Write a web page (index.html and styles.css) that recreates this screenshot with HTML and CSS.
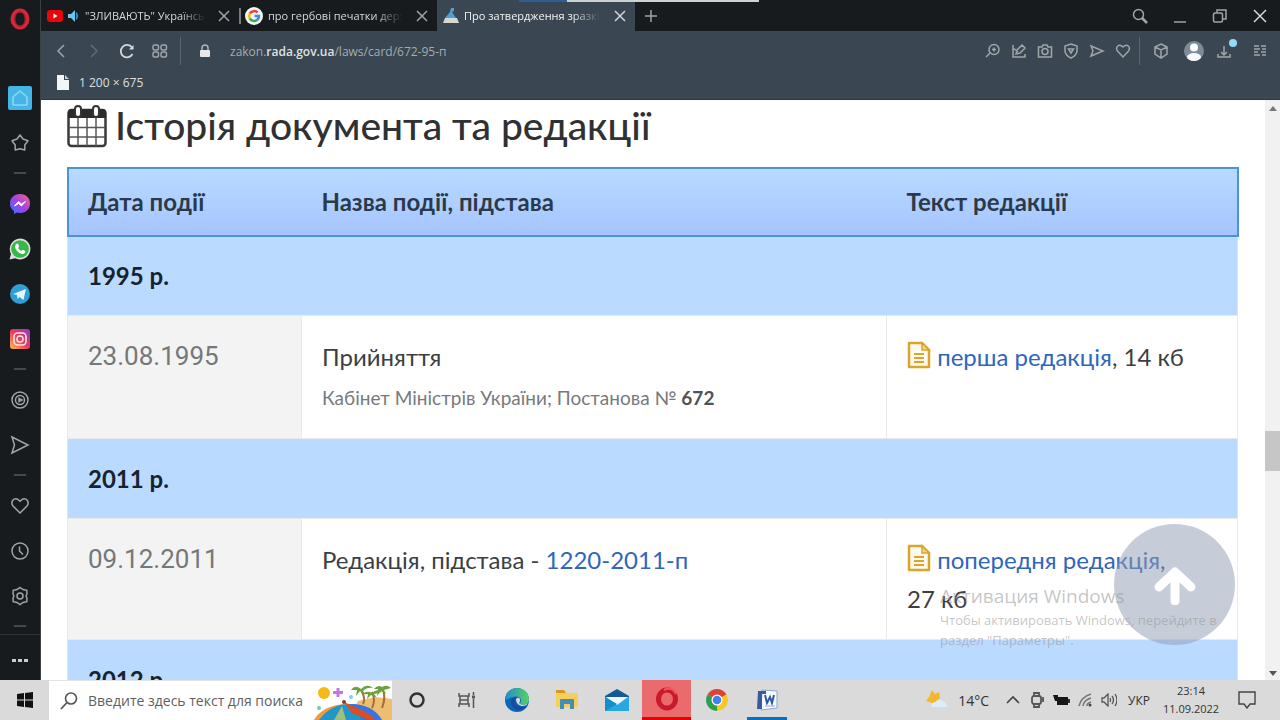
FILE: index.html
```html
<!DOCTYPE html>
<html lang="uk">
<head>
<meta charset="utf-8">
<meta name="viewport" content="width=device-width, initial-scale=1">
<title>Історія документа та редакції</title>
<link rel="stylesheet" href="styles.css">
</head>
<body>
<div class="window">
  <nav class="sidebar" aria-label="Бічна панель">
    <button class="opera-menu" aria-label="Opera"><svg width="22" height="22" viewBox="0 0 22 22"><ellipse cx="11" cy="11" rx="7.5" ry="8.5" fill="none" stroke="#d5273a" stroke-width="4"/><ellipse cx="11" cy="11" rx="5" ry="7.5" fill="none" stroke="#a3182b" stroke-width="1"/></svg></button>
    <div class="side-list">
      <button class="side-item" aria-label="Головна"><svg width="26" height="26" viewBox="0 0 26 26"><rect x="1" y="1" width="24" height="24" rx="2" fill="#45b4e6"/><path d="M6 12l7-6 7 6v8H6z" fill="none" stroke="#8ad7f6" stroke-width="1.6" stroke-linejoin="round"/></svg></button>
      <button class="side-item" aria-label="Закладки"><svg class="line" width="20" height="20" viewBox="0 0 20 20"><path d="M10 2l3 4 5 1.800-3.200 4.200V17L10 15.800 5.200 17v-5L2 7.800 7 6z" stroke-linejoin="round"/></svg></button>
      <hr class="side-dash">
      <button class="side-item" aria-label="Messenger"><svg width="24" height="24" viewBox="0 0 24 24"><defs><linearGradient id="ms" x1="0" y1="1" x2="1" y2="0"><stop offset="0" stop-color="#2a7bff"/><stop offset=".5" stop-color="#a341e8"/><stop offset="1" stop-color="#ff6478"/></linearGradient></defs><path d="M12 2c6 0 10 4 10 9.500S18 21 12 21l-3-.5L6 22v-3c-3-2-4-4.500-4-7.500C2 6 6 2 12 2z" fill="url(#ms)"/><path d="M6.500 14l4-4.500 3 2.500 4-2.500-4 4.500-3-2.500z" fill="#fff" stroke="#fff" stroke-width="1"/></svg></button>
      <button class="side-item" aria-label="WhatsApp"><svg width="24" height="24" viewBox="0 0 24 24"><path d="M12 1.500a10.500 10.500 0 1 1-5 19.800L1.500 22.500 3 17A10.500 10.500 0 0 1 12 1.500z" fill="#ddd"/><circle cx="12" cy="12" r="8.800" fill="#35b944"/><path d="M8 7l2-.5 1.200 3-1 1.500c.8 1.500 1.800 2.300 3.200 3l1.400-1.200 2.700 1.300c0 2-1.500 3-3 2.900-4-.5-7.500-4.500-7.500-7.500z" fill="#fff"/></svg></button>
      <button class="side-item" aria-label="Telegram"><svg width="24" height="24" viewBox="0 0 24 24"><circle cx="12" cy="12" r="10" fill="#2f9fd6"/><path d="M5 12l13-5-2.500 11-4-3-2 2-.5-4z" fill="#e8f5fc"/></svg></button>
      <button class="side-item" aria-label="Instagram"><svg width="24" height="24" viewBox="0 0 24 24"><defs><linearGradient id="ig" x1="0" y1="1" x2="1" y2="0"><stop offset="0" stop-color="#ffc04a"/><stop offset=".5" stop-color="#e8395f"/><stop offset="1" stop-color="#8a3ad0"/></linearGradient></defs><rect x="2" y="2" width="20" height="20" rx="3" fill="url(#ig)"/><rect x="6" y="6" width="12" height="12" rx="3.500" fill="none" stroke="#ffe2dc" stroke-width="1.600"/><circle cx="12" cy="12" r="3" fill="none" stroke="#ffe2dc" stroke-width="1.600"/></svg></button>
      <hr class="side-dash">
      <button class="side-item" aria-label="Плеєр"><svg class="line" width="20" height="20" viewBox="0 0 20 20"><circle cx="10" cy="10" r="8"/><circle cx="10" cy="10" r="4.500"/><path d="M9 8.500l3 1.500-3 1.500z"/></svg></button>
      <button class="side-item" aria-label="Потік"><svg class="line" width="20" height="20" viewBox="0 0 20 20"><path d="M2 2l16 8-16 8 2.500-8z"/></svg></button>
      <hr class="side-dash">
      <button class="side-item" aria-label="Обране"><svg class="line" width="20" height="20" viewBox="0 0 20 20"><path d="M10 17L3 10C0 6 4 1 8 3.500l2 1.800 2-1.800C16 1 20 6 17 10z"/></svg></button>
      <button class="side-item" aria-label="Історія"><svg class="line" width="20" height="20" viewBox="0 0 20 20"><circle cx="10" cy="10" r="8"/><path d="M9.500 5.500V10l3.500 3.500"/></svg></button>
      <button class="side-item" aria-label="Налаштування"><svg class="line" width="20" height="20" viewBox="0 0 20 20"><path d="M10 1.500l3 2 3.800.8.200 3.700-1 2 1 2-.2 3.700-3.800.8-3 2-3-2-3.800-.8L3 12l1-2-1-2 .2-3.700L7 3.500z"/><circle cx="10" cy="10" r="3"/></svg></button>
      <hr class="side-dash">
    </div>
    <button class="side-more" aria-label="Більше"><svg width="18" height="6" viewBox="0 0 18 6" fill="#c9cbcd"><rect x="1" y="1" width="4" height="3"/><rect x="7" y="1" width="4" height="3"/><rect x="13" y="1" width="4" height="3"/></svg></button>
  </nav>

  <div class="browser">
    <header class="tabs">
      <div class="tab">
        <svg width="16" height="12" viewBox="0 0 16 12"><rect width="16" height="12" rx="3" fill="#e8050b"/><path d="M6.500 3.500l4 2.500-4 2.500z" fill="#fff"/></svg>
        <svg width="12" height="12" viewBox="0 0 12 12"><path d="M0 4h3l4-4v12L3 8H0z" fill="#6fc4ec"/><path d="M8 2c3 1 3 7 0 8z" fill="#2985bb"/></svg>
        <span class="tab-title">"ЗЛИВАЮТЬ" Українську</span>
        <button class="close" aria-label="Закрити вкладку"><svg class="line" width="12" height="12" viewBox="0 0 12 12"><path d="M1 1l10 10M11 1L1 11"/></svg></button>
      </div>
      <div class="tab divided">
        <svg width="18" height="18" viewBox="0 0 18 18"><circle cx="9" cy="9" r="9" fill="#f4f4f4"/><g fill="none" stroke-width="2.500"><path d="M12.500 5.500A5 5 0 0 0 4.800 6.500" stroke="#e94335"/><path d="M4.800 6.500a5 5 0 0 0 0 5" stroke="#fabb05"/><path d="M4.800 11.500a5 5 0 0 0 7.500 1.300" stroke="#34a853"/><path d="M12.300 12.800A5 5 0 0 0 14 9H9.500" stroke="#4285f4"/></g></svg>
        <span class="tab-title">про гербові печатки держави</span>
        <button class="close" aria-label="Закрити вкладку"><svg class="line" width="12" height="12" viewBox="0 0 12 12"><path d="M1 1l10 10M11 1L1 11"/></svg></button>
      </div>
      <div class="tab active">
        <svg width="16" height="16" viewBox="0 0 16 16"><path d="M8 0h3v3L9 4l4 6H2l5-6z" fill="#4f9ed5"/><path d="M2 10h12l2 5H0z" fill="#d6d6d3"/></svg>
        <span class="tab-title">Про затвердження зразків</span>
        <button class="close" aria-label="Закрити вкладку"><svg class="line bright" width="12" height="12" viewBox="0 0 12 12"><path d="M1 1l10 10M11 1L1 11"/></svg></button>
        <span class="load-bar"></span>
      </div>
      <button class="new-tab" aria-label="Нова вкладка"><svg class="line" width="14" height="14" viewBox="0 0 14 14"><path d="M7 1v12M1 7h12"/></svg></button>
      <div class="win-controls">
        <button aria-label="Пошук"><svg class="line" width="16" height="16" viewBox="0 0 16 16"><circle cx="6.500" cy="6.500" r="5"/><path d="M10 10l5 5" stroke-width="2.500"/></svg></button>
        <button aria-label="Згорнути"><svg class="line" width="14" height="14" viewBox="0 0 14 14"><path d="M1 13h12"/></svg></button>
        <button aria-label="Розгорнути"><svg class="line" width="16" height="16" viewBox="0 0 16 16"><rect x="1.500" y="5" width="9" height="9" rx="1.500"/><path d="M5 4.500V2h9v9h-3"/></svg></button>
        <button aria-label="Закрити"><svg class="line bright" width="14" height="14" viewBox="0 0 14 14"><path d="M1 1l12 12M13 1L1 13"/></svg></button>
      </div>
    </header>

    <div class="toolbar">
      <div class="nav-buttons">
        <button aria-label="Назад"><svg class="line" width="14" height="16" viewBox="0 0 14 16"><path d="M10 2L4 8l6 6"/></svg></button>
        <button aria-label="Вперед" disabled><svg class="line" width="14" height="16" viewBox="0 0 14 16"><path d="M4 2l6 6-6 6"/></svg></button>
        <button aria-label="Оновити"><svg class="line bright" width="16" height="16" viewBox="0 0 16 16"><path d="M13.500 11A6.200 6.200 0 1 1 13 4.500" stroke-width="1.800"/><path d="M14.500 2v4.500H10z" fill="#dadddf" stroke="none"/></svg></button>
        <button aria-label="Експрес-панель"><svg class="line" width="16" height="14" viewBox="0 0 16 14"><rect x="1" y="1" width="5.500" height="5" rx="1.500"/><rect x="9" y="1" width="5.500" height="5" rx="1.500"/><rect x="1" y="8" width="5.500" height="5" rx="1.500"/><rect x="9" y="8" width="5.500" height="5" rx="1.500"/></svg></button>
      </div>
      <button class="address" aria-label="Адреса">
        <svg width="12" height="14" viewBox="0 0 12 14"><rect x="1" y="6" width="10" height="7" rx="1" fill="#e6e8ea"/><path d="M3 6V4a3 3 0 0 1 6 0v2" fill="none" stroke="#aeb4b9" stroke-width="1.500"/></svg>
        <span>zakon.<b>rada.gov.ua</b>/laws/card/672-95-п</span>
      </button>
      <div class="page-tools">
        <button aria-label="Масштаб"><svg class="line" width="16" height="16" viewBox="0 0 16 16"><circle cx="9" cy="6.500" r="5"/><path d="M5 10l-4 4M7 6.500h4M9 4.500v4"/></svg></button>
        <button aria-label="Поділитися"><svg class="line" width="16" height="16" viewBox="0 0 16 16"><path d="M2 2v12h12v-3M5 11l1-4 5-5 3 3-5 5zM2 5l5 4"/></svg></button>
        <button aria-label="Знімок"><svg class="line" width="16" height="16" viewBox="0 0 16 16"><path d="M1.500 4H5l1-2h4l1 2h3.500v10h-13z"/><circle cx="8" cy="8.500" r="3"/></svg></button>
        <button aria-label="Блокування реклами"><svg class="line" width="16" height="16" viewBox="0 0 16 16"><path d="M8 1l6 2v5c0 3-3 6-6 7-3-1-6-4-6-7V3z"/><path d="M5.500 6h5L8 10z"/></svg></button>
        <button aria-label="Надіслати"><svg class="line" width="16" height="16" viewBox="0 0 16 16"><path d="M2 3l12 5-12 5 2-5z"/></svg></button>
        <button aria-label="Додати в обране"><svg class="line" width="16" height="16" viewBox="0 0 16 16"><path d="M8 14L2.500 8C0 4 4 0 8 4c4-4 8 0 5.500 4z"/></svg></button>
      </div>
      <div class="user-tools">
        <button aria-label="Розширення"><svg class="line" width="16" height="16" viewBox="0 0 16 16"><path d="M8 1l6 3v7l-6 4-6-4V4zM2 4l6 3 6-3M8 7v8"/></svg></button>
        <button aria-label="Профіль"><svg width="20" height="20" viewBox="0 0 20 20"><circle cx="10" cy="10" r="10" fill="#7b8b99"/><circle cx="10" cy="6.500" r="4" fill="#fff"/><ellipse cx="10" cy="16" rx="7" ry="4" fill="#f6faff"/></svg></button>
        <button aria-label="Завантаження"><svg class="line" width="20" height="26" viewBox="0 0 20 26"><path d="M7 8v9M4 14l3 3 3-3M1 16v3h12v-3"/><circle cx="16" cy="5" r="4" fill="#8edcfa" stroke="none"/></svg></button>
        <button aria-label="Налаштування панелі"><svg class="line" width="14" height="14" viewBox="0 0 14 14"><path d="M1 2h5M8 2h5M1 5h6M9 5h4M1 8h4M8 8h5M1 11h6M9 11h4"/></svg></button>
      </div>
    </div>

    <div class="bookmarks">
      <a class="bookmark" href="#"><svg width="12" height="15" viewBox="0 0 12 15"><path d="M0 0h7v5h5v10H0z" fill="#f4f5f6"/><path d="M8 0l4 4H8z" fill="#c6cbd0"/></svg>1 200 × 675</a>
    </div>

    <div class="viewport">
      <main class="page">
        <h1><svg width="40" height="44" viewBox="0 0 40 44"><rect x="1.500" y="6" width="37" height="36" rx="3" fill="#fff" stroke="#3a3a3a" stroke-width="2.500"/><path d="M1 14V9q0-4 4-4h30q4 0 4 4v5z" fill="#2b2b2b"/><path d="M2 23.500h36M2 33h36M11 14v28M20 14v28M29 14v28" stroke="#555" stroke-width="1.500"/><rect x="8" y="2" width="6" height="11" rx="3" fill="#fff" stroke="#333" stroke-width="2"/><rect x="26" y="2" width="6" height="11" rx="3" fill="#fff" stroke="#333" stroke-width="2"/></svg>Історія документа та редакції</h1>
        <table class="history">
          <thead>
            <tr><th class="col-date" scope="col">Дата події</th><th class="col-event" scope="col">Назва події, підстава</th><th class="col-text" scope="col">Текст редакції</th></tr>
          </thead>
          <tbody>
            <tr class="year"><th colspan="3">1995 р.</th></tr>
            <tr>
              <td class="date">23.08.1995</td>
              <td>Прийняття<p class="note">Кабінет Міністрів України; Постанова № <b>672</b></p></td>
              <td><svg class="doc" width="24" height="28" viewBox="0 0 24 28"><path d="M2 2h13l7 7v17H2z" fill="#fffaf0" stroke="#dba52c" stroke-width="2.500" stroke-linejoin="round"/><path d="M15 2v7h7z" fill="#f3d58a" stroke="#dba52c" stroke-width="1.500"/><path d="M7 13h10M7 17h10M7 21h10" stroke="#dba52c" stroke-width="2"/></svg> <a href="#">перша редакція</a>, 14 кб</td>
            </tr>
            <tr class="year"><th colspan="3">2011 р.</th></tr>
            <tr>
              <td class="date">09.12.2011</td>
              <td>Редакція, підстава - <a href="#">1220-2011-п</a></td>
              <td><svg class="doc" width="24" height="28" viewBox="0 0 24 28"><path d="M2 2h13l7 7v17H2z" fill="#fffaf0" stroke="#dba52c" stroke-width="2.500" stroke-linejoin="round"/><path d="M15 2v7h7z" fill="#f3d58a" stroke="#dba52c" stroke-width="1.500"/><path d="M7 13h10M7 17h10M7 21h10" stroke="#dba52c" stroke-width="2"/></svg> <a href="#">попередня редакція</a>,<br>27 кб</td>
            </tr>
            <tr class="year"><th colspan="3">2012 р.</th></tr>
          </tbody>
        </table>
      </main>
      <div class="scrollbar" aria-hidden="true">
        <svg width="8" height="5" viewBox="0 0 8 5"><path d="M0 5l4-5 4 5z" fill="#777"/></svg>
        <span class="track"><span class="thumb"></span></span>
        <svg width="8" height="5" viewBox="0 0 8 5"><path d="M0 0h8L4 5z" fill="#555"/></svg>
      </div>
      <button class="to-top" aria-label="Догори"><svg width="42" height="40" viewBox="0 0 42 40"><path d="M21 36V8M5 22L21 7l16 15" fill="none" stroke="#fff" stroke-width="9" stroke-linecap="round" stroke-linejoin="round"/></svg></button>
      <div class="watermark"><p class="watermark-title">Активация Windows</p><p>Чтобы активировать Windows, перейдите в раздел "Параметры".</p></div>
    </div>
  </div>
</div>

<footer class="taskbar">
  <button class="start" aria-label="Пуск"><svg width="18" height="18" viewBox="0 0 18 18"><path d="M1 3l7-1v6.500H1zM9 2l8-1v7.500H9zM1 9.500h7V16l-7-1zM9 9.500h8V17l-8-1z" fill="#111"/></svg></button>
  <label class="search">
    <svg width="18" height="18" viewBox="0 0 18 18"><circle cx="11" cy="6.500" r="5.500" fill="none" stroke="#555" stroke-width="1.600"/><path d="M7 10.500L1 17" stroke="#555" stroke-width="1.800"/></svg>
    <input type="text" placeholder="Введите здесь текст для поиска" aria-label="Введите здесь текст для поиска">
    <svg width="78" height="38" viewBox="0 0 78 38"><path d="M44 19q18-6 34-2v21H34z" fill="#efbd72"/><path d="M0 38Q8 24 30 22L50 38z" fill="#ef9a3f"/><path d="M5 38q12-16 30-16 24 0 33 16z" fill="#2595c8"/><path d="M36 22q22 0 32 16H48z" fill="#3674e4"/><path d="M20 38l8-14 4 14z" fill="#9dc17c"/><path d="M30 20l20 9 11 7-6 2-17-7z" fill="#d94f25"/><circle cx="30" cy="20" r="2" fill="#8b3a24"/><circle cx="10" cy="11" r="6" fill="#f6ba18"/><path d="M24 6v9M19 10.500h10" stroke="#c474e8" stroke-width="3"/><circle cx="5" cy="26" r="2" fill="#6bd1a0"/><circle cx="37" cy="15" r="2" fill="#79cff5"/><path d="M47 8q5 8 2 14M58 10q4 8 0 16M69 8q3 8-1 18" fill="none" stroke="#a56d35" stroke-width="2"/><path d="M37 8q4-6 10-1 6-6 12-1-6-1-10 3l3 4-6-4-4 5 1-6zM49 12q4-4 9-1 5-5 10-1l-8 2 3 4-6-3-4 4 1-5zM60 7q4-5 8-2 5-3 9 1l-7 2 2 4-5-3-4 5 1-7z" fill="#68a33b"/></svg>
  </label>
  <div class="apps">
    <button aria-label="Cortana"><svg width="18" height="18" viewBox="0 0 18 18"><circle cx="9" cy="9" r="6.500" fill="none" stroke="#333" stroke-width="2.500"/></svg></button>
    <button aria-label="Представление задач"><svg width="18" height="18" viewBox="0 0 18 18" fill="none" stroke="#555" stroke-width="1.500"><path d="M1 2v3h10V2M1 16v-3h10v3M2 5v8M10 5v8M2 9h8M15.500 1v3M15.500 8v9"/><path d="M14 6h3" stroke-width="3"/></svg></button>
    <button aria-label="Edge"><svg width="26" height="26" viewBox="0 0 26 26"><defs><linearGradient id="ed"><stop offset="0" stop-color="#218bd7"/><stop offset="1" stop-color="#56d35c"/></linearGradient></defs><circle cx="13" cy="13" r="12" fill="#0d65b5"/><path d="M1 12C3-3 24-2 25 12c0 6-7 7-10 5 5-4 0-9-6-7-5 1-7 4-8 2z" fill="url(#ed)"/><path d="M12 11c-4 4 1 11 11 8-6 8-17 3-16-5 1-3 3-4 5-3z" fill="#164c9b"/><path d="M12 12c4-4 5 2 3 4 2 3 7 2 9 0-2 5-12 4-12-4z" fill="#ddd"/></svg></button>
    <button aria-label="Проводник"><svg width="24" height="22" viewBox="0 0 24 22"><path d="M1 1h8l3 3h11v14H1z" fill="#f7ce59"/><path d="M1 1h8l2 3H1z" fill="#d3981f"/><path d="M5 20v-9q0-1 1-1h12q1 0 1 1v9h-4v-5H9v5z" fill="#438eb8"/></svg></button>
    <button aria-label="Почта"><svg width="26" height="24" viewBox="0 0 26 24"><path d="M1 8l12-7 12 7v3H1z" fill="#145a96"/><path d="M1 9h24v14H1z" fill="#28a8e0"/><path d="M2 9h22l-11 8z" fill="#edf6fc"/><path d="M1 9v14l12-7z" fill="#158ccc"/></svg></button>
    <button class="app-opera" aria-label="Opera"><svg width="26" height="26" viewBox="0 0 26 26"><ellipse cx="13" cy="13" rx="8.500" ry="9" fill="none" stroke="#c9192d" stroke-width="5"/><path d="M10 4q8-4 12 4" fill="none" stroke="#f05560" stroke-width="2"/></svg></button>
    <button aria-label="Chrome"><svg width="24" height="24" viewBox="0 0 24 24"><path d="M12 12L2.500 6.500A11 11 0 0 1 21.500 6.500z" fill="#db4336"/><path d="M12 12l9.500-5.500A11 11 0 0 1 12 23z" fill="#f8c829"/><path d="M12 12v11A11 11 0 0 1 2.500 6.500z" fill="#2e9d4f"/><circle cx="12" cy="12" r="5.500" fill="#fff"/><circle cx="12" cy="12" r="4.300" fill="#3d82ed"/></svg></button>
    <button class="app-word" aria-label="Word"><svg width="24" height="24" viewBox="0 0 24 24"><path d="M7 2l15 1v17L6 22z" fill="#f7faff" stroke="#8ba6d4"/><path d="M3 3h8v3H7v15H2z" fill="#365c9f"/><path d="M10 7l2 8 3-6 2 6 2-8" fill="none" stroke="#2d58a6" stroke-width="2"/><path d="M10 18h10" stroke="#8aa9dd"/></svg></button>
  </div>
  <div class="tray">
    <button class="weather"><svg width="22" height="20" viewBox="0 0 22 20"><path d="M6 0l3 4 4-2 1 6-6 6-5-2-3-1 3-4z" fill="#f5b82c"/><path d="M5 17q0-5 5-5 2-4 6-1 5 1 5 6z" fill="#dcecf8"/></svg>14°C</button>
    <div class="tray-icons">
      <button aria-label="Скрытые значки"><svg width="14" height="10" viewBox="0 0 14 10"><path d="M1 8l6-6 6 6" fill="none" stroke="#444" stroke-width="1.600"/></svg></button>
      <button aria-label="Устройство"><svg width="14" height="16" viewBox="0 0 14 16" fill="none" stroke="#555" stroke-width="1.800"><rect x="2" y="4" width="9" height="8" rx="2"/><path d="M4 4V1h5v3M4 12v3h5v-3M13 5v5"/></svg></button>
      <button aria-label="Батарея"><svg width="18" height="12" viewBox="0 0 18 12"><path d="M1 1h5v2h10v8H5V7H3z" fill="#171717"/><path d="M17 5v4" stroke="#333" stroke-width="2"/></svg></button>
      <button aria-label="Сеть"><svg width="14" height="14" viewBox="0 0 14 14"><path d="M1 13Q3 4 13 1M5 13q1-6 8-8M9 13q0-3 4-4" fill="none" stroke="#777" stroke-width="1.500"/><circle cx="12" cy="12" r="1.500" fill="#444"/></svg></button>
      <button aria-label="Громкость"><svg width="16" height="14" viewBox="0 0 16 14" fill="none" stroke="#555" stroke-width="1.300"><path d="M1 5h2l4-4v12L3 9H1zM9 5q1 2 0 4M11 3q3 4 0 8M14 1q4 6 0 12"/></svg></button>
    </div>
    <button class="lang">УКР</button>
    <button class="clock"><time>23:14</time><span>11.09.2022</span></button>
    <button class="notify" aria-label="Уведомления"><svg width="18" height="18" viewBox="0 0 18 18"><path d="M1 1h16v12h-5l-3 4-3-4H1z" fill="none" stroke="#444" stroke-width="1.400"/></svg></button>
  </div>
</footer>
</body>
</html>
```
FILE: styles.css
```css
* { box-sizing: border-box; }

body {
  margin: 0;
  height: 100vh;
  display: flex;
  flex-direction: column;
  overflow: hidden;
  font-family: "Open Sans", "Noto Sans", sans-serif;
  background: #fff;
}

button {
  display: flex;
  align-items: center;
  justify-content: center;
  margin: 0;
  padding: 0;
  border: 0;
  background: none;
  font: inherit;
  color: inherit;
}

p { margin: 0; }
a { color: #2f66bb; text-decoration: none; }
svg { flex: none; }

.line { fill: none; stroke: #a0a5a9; stroke-width: 1.5; }
.bright { stroke: #d4d7d9; }

.window { flex: 1; min-height: 0; display: flex; }

/* Sidebar */
.sidebar {
  width: 41px;
  flex: none;
  display: flex;
  flex-direction: column;
  background: #171b1e;
  border-right: 1px solid #3b4045;
}
.opera-menu { height: 40px; margin-bottom: 37px; }
.side-list { flex: 1; display: flex; flex-direction: column; }
.side-item { height: 45px; }
.side-dash { width: 12px; height: 2px; margin: 7px auto; border: 0; background: #44494c; }
.side-more { height: 47px; padding-top: 7px; border-top: 1px solid #303539; }

/* Tabs */
.browser { flex: 1; min-width: 0; display: flex; flex-direction: column; }
.tabs { height: 31px; flex: none; display: flex; background: #171b1e; color: #d6d9da; }
.tab {
  position: relative;
  width: 198px;
  display: flex;
  align-items: center;
  gap: 5px;
  padding: 0 8px 0 6px;
  font-size: 11px;
}
.tab.divided::before { content: ""; position: absolute; left: 0; top: 8px; width: 2px; height: 16px; background: #777b7e; }
.tab.active { background: #3a4651; color: #f1f3f4; }
.tab-title {
  flex: 1;
  overflow: hidden;
  white-space: nowrap;
  mask-image: linear-gradient(to right, #000 75%, transparent 95%);
}
.close { width: 14px; height: 14px; }
.load-bar { position: absolute; left: 82px; top: 0; width: 240px; height: 2px; background: linear-gradient(to right, #2f5f92 20%, #cdd2d5 20%); }
.new-tab { width: 32px; }
.win-controls { margin-left: auto; display: flex; }
.win-controls button { width: 40px; }

/* Toolbar */
.toolbar {
  height: 40px;
  flex: none;
  display: flex;
  align-items: center;
  background: #3a4651;
}
.nav-buttons { display: flex; gap: 3px; padding: 0 5px; border-right: 1px solid #586570; }
.nav-buttons button { width: 30px; height: 28px; }
.nav-buttons button:disabled { opacity: .4; }
.address { flex: 1; justify-content: flex-start; gap: 19px; padding-left: 18px; font-size: 12px; color: #a4acb3; }
.address b { font-weight: 600; color: #dfe2e5; }
.page-tools, .user-tools { display: flex; align-items: center; height: 28px; }
.page-tools button { width: 26px; }
.page-tools { padding-right: 3px; border-right: 1px solid #586570; }
.user-tools { padding: 0 4px; }
.user-tools button { width: 33px; }

.bookmarks { height: 29px; flex: none; display: flex; align-items: center; padding: 0 16px 5px; background: #3a4651; border-bottom: 1px solid #2d3740; }
.bookmark { display: flex; align-items: center; gap: 10px; font-size: 12px; color: #dde0e3; }

/* Page */
.viewport { position: relative; flex: 1; min-height: 0; display: flex; overflow: hidden; background: #fff; }
.page { flex: 1; padding: 0 27px 0 26px; font-family: Lato, "Noto Sans", sans-serif; font-size: 24px; line-height: 39px; color: #3b3f43; }
h1 {
  display: flex;
  align-items: center;
  gap: 8px;
  height: 51px;
  margin: 0 0 16px;
  font-size: 39px;
  font-weight: 500;
  color: #2f3133;
}
.history { width: 100%; table-layout: fixed; border-collapse: collapse; border: 1px solid #e2e4e6; }
.history th { text-align: left; font-weight: 700; color: #16232f; padding: 20px; }
.history thead tr { outline: 2px solid #4a93d9; outline-offset: -1px; background: linear-gradient(#b8dbff, #a5c4ff); }
.history thead th { padding: 14px 20px 15px; color: #2b3a4b; }
.col-date { width: 20%; }
.col-event { width: 50%; }
.col-text { width: 30%; }
.history td { padding: 21px 20px; vertical-align: top; border: 1px solid #e8eaec; }
.history .year { background: #badaff; }
.history .date { background: #f3f3f3; color: #75787a; font-family: Roboto, sans-serif; font-size: 26px; }
.note { margin-top: 2px; font-size: 19px; color: #777a7d; }
.note b { color: #505356; }
.doc { vertical-align: -3px; }

.scrollbar { width: 15px; flex: none; display: flex; flex-direction: column; align-items: center; padding: 6px 0 4px; background: #f1f1f1; }
.track { flex: 1; width: 100%; padding-top: 320px; }
.thumb { display: block; height: 40px; background: #c6c6c6; }

.to-top {
  position: absolute;
  right: 45px;
  bottom: 35px;
  width: 121px;
  height: 121px;
  border-radius: 50%;
  background: rgba(145, 158, 180, .52);
}
.watermark { position: absolute; right: 52px; bottom: 30px; width: 288px; font-size: 13px; line-height: 20px; color: rgba(150, 150, 150, .55); }
.watermark-title { font-size: 19px; line-height: 28px; }

/* Taskbar */
.taskbar { height: 40px; flex: none; display: flex; background: #dadada; color: #333; }
.start { width: 49px; }
.search { width: 343px; display: flex; align-items: center; background: #fff; padding-left: 11px; border-top: 1px solid #e4e4e4; }
.search input { flex: 1; min-width: 0; margin-left: 10px; border: 0; padding: 0; outline: 0; font: 14px "Open Sans", sans-serif; background: none; }
.search input::placeholder { color: #5f5f5f; opacity: 1; }
.apps { display: flex; gap: 1px; }
.apps button { width: 49px; }
.apps .app-opera { background: #e96b6b; border-bottom: 3px solid #ea0000; }
.apps .app-word { background: linear-gradient(#0c70c0, #0c70c0) center bottom / 40px 3px no-repeat; }
.tray { margin-left: auto; display: flex; align-items: center; }
.weather { gap: 10px; margin-right: 12px; font-size: 14px; }
.tray-icons { display: flex; }
.tray-icons button { width: 24px; }
.lang { width: 36px; font-size: 12px; }
.clock { width: 68px; flex-direction: column; font-size: 11px; line-height: 18px; }
.notify { width: 44px; margin-right: 11px; }
```
